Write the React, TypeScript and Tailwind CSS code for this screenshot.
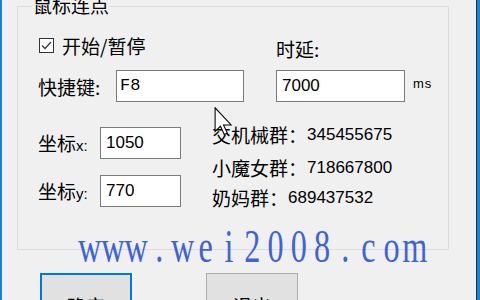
import React from 'react';

const CJK = { fontFamily: '"Noto Sans CJK SC", "Liberation Sans", sans-serif' };
const SANS = { fontFamily: '"Liberation Sans", sans-serif' };

function TextBox({ value, className }: { value: string; className: string }) {
  return (
    <div
      className={`h-[32px] bg-white border border-[#7a7a7a] flex items-center pl-[5px] text-[17px] text-black ${className}`}
      style={SANS}
    >
      {value}
    </div>
  );
}

function CheckBox() {
  return (
    <div className="w-[15px] h-[15px] border border-[#333333] bg-white flex items-center justify-center">
      <svg width="13" height="13" viewBox="0 0 13 13">
        <path d="M2 6.5 L5 9.5 L11 3" fill="none" stroke="#3c3c3c" strokeWidth="1.3" />
      </svg>
    </div>
  );
}

function Cursor() {
  return (
    <svg width="19" height="29" viewBox="0 0 12 19" className="absolute left-[214px] top-[107px]">
      <path
        d="M0.5 0.5 L0.5 16 L4 12.5 L6.5 18 L8.5 17 L6 11.8 L11 11.8 Z"
        fill="#ffffff"
        stroke="#000000"
        strokeWidth="0.7"
        strokeLinejoin="miter"
      />
    </svg>
  );
}

// serif monospace watermark: each char in a fixed cell, squeezed horizontally
function Watermark() {
  const chars = 'www.wei2008.com'.split('');
  return (
    <div
      className="absolute left-[78px] top-[224px] flex origin-left scale-x-[0.7] text-[46px] leading-none text-[#4063d4] pointer-events-none"
      style={{ fontFamily: '"Liberation Serif", serif' }}
    >
      {chars.map((c, i) => (
        <span key={i} className="w-[33.2px] flex justify-center">
          {c}
        </span>
      ))}
    </div>
  );
}

export default function App() {
  return (
    <div className="w-[480px] h-[300px] overflow-hidden bg-[#f0f0f0] flex relative text-black" style={CJK}>
      <div className="w-[2px] bg-[#1883d7] flex-shrink-0" />

      <div className="flex-1 flex flex-col">
        {/* Group box */}
        <div className="mt-[6px] ml-[15px] w-[432px] h-[244px] border border-[#dcdcdc] relative flex-shrink-0">
          <span className="absolute left-[14px] top-[-12px] px-[1px] bg-[#f0f0f0] text-[19px] leading-[19px]">
            鼠标连点
          </span>

          {/* top section */}
          <div className="flex mt-[26px] pl-[20px]">
            <div className="w-[238px] flex flex-col">
              <div className="h-[24px] flex items-center">
                <div className="ml-[1px]">
                  <CheckBox />
                </div>
                <span className="ml-[8px] text-[19px] leading-none">开始/暂停</span>
              </div>
              <div className="mt-[13px] flex items-center">
                <span className="w-[78px] text-[19px] leading-none">快捷键:</span>
                <div
                  className="w-[128px] h-[32px] bg-white border border-[#7a7a7a] flex items-center pl-[3px] text-[17px]"
                  style={{ fontFamily: '"Liberation Mono", monospace' }}
                >
                  F8
                </div>
              </div>
            </div>
            <div className="flex flex-col">
              <div className="h-[24px] flex items-center pt-[6px]">
                <span className="text-[19px] leading-none">时延:</span>
              </div>
              <div className="mt-[13px] flex items-center">
                <TextBox value="7000" className="w-[129px]" />
                <span className="ml-[8px] -mt-[4px] text-[13px] tracking-[1px]" style={SANS}>
                  ms
                </span>
              </div>
            </div>
          </div>

          {/* lower section */}
          <div className="flex mt-[21px] pl-[20px]">
            <div className="w-[174px] flex flex-col pt-[4px]">
              <div className="flex items-center">
                <span className="w-[62px] text-[19px] leading-none">
                  坐标<span className="text-[15px]" style={SANS}>x:</span>
                </span>
                <TextBox value="1050" className="w-[81px]" />
              </div>
              <div className="mt-[16px] flex items-center">
                <span className="w-[62px] text-[19px] leading-none">
                  坐标<span className="text-[15px]" style={SANS}>y:</span>
                </span>
                <TextBox value="770" className="w-[81px]" />
              </div>
            </div>
            <div className="flex flex-col text-[19px]">
              <div className="h-[24px] flex items-center">
                交机械群：<span className="text-[17px]" style={SANS}>345455675</span>
              </div>
              <div className="mt-[9px] h-[24px] flex items-center">
                小魔女群：<span className="text-[17px]" style={SANS}>718667800</span>
              </div>
              <div className="mt-[6px] h-[24px] flex items-center">
                奶妈群：<span className="text-[17px]" style={SANS}>689437532</span>
              </div>
            </div>
          </div>
        </div>

        {/* Buttons */}
        <div className="flex mt-[23px] ml-[38px] gap-[74px]">
          <button className="w-[92px] h-[64px] flex-shrink-0 bg-[#e1e1e1] border-2 border-[#0078d7] text-[19px] leading-none">
            确定
          </button>
          <button className="w-[92px] h-[64px] flex-shrink-0 bg-[#e1e1e1] border border-[#adadad] text-[19px] leading-none">
            退出
          </button>
        </div>
      </div>

      <div className="w-px bg-[#2b2b2b] flex-shrink-0" />
      <div className="w-[3px] bg-[#1883d7] flex-shrink-0" />

      <Watermark />
      <Cursor />
    </div>
  );
}
